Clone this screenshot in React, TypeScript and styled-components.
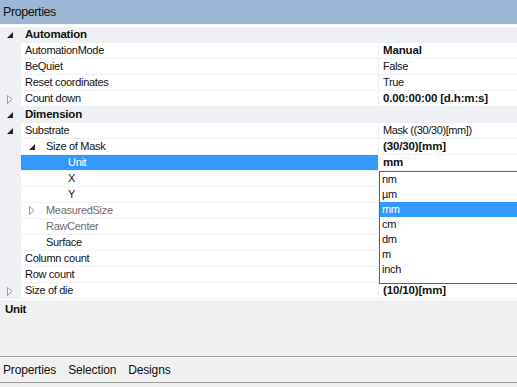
import React from "react";
import styled, { createGlobalStyle } from "styled-components";

const GlobalStyle = createGlobalStyle`
  html, body { margin: 0; padding: 0; background: #f0f0f0; }
  body { font-family: "Liberation Sans", Arial, sans-serif; }
  * { box-sizing: border-box; }
`;

const LINE = "#eef0f3";
const HILITE = "#3399ff";

const Window = styled.div`
  width: 517px;
  height: 387px;
  display: flex;
  flex-direction: column;
  background: #f0f0f0;
  overflow: hidden;
`;

const TitleBar = styled.div`
  height: 24px;
  flex: none;
  background: #9bb7d5;
  display: flex;
  align-items: center;
  padding-left: 3px;
  font-size: 12.5px;
  letter-spacing: -0.4px;
  color: #111;
`;

const Grid = styled.div`
  flex: none;
  height: 274px;
  background: #fff;
  padding-top: 2px;
  display: flex;
  flex-direction: column;
  border-top: 1px solid #f4f6f9;
  position: relative;
`;

const Row = styled.div`
  height: 16px;
  flex: none;
  display: flex;
  font-size: 11px;
  letter-spacing: -0.3px;
  line-height: 15px;
`;

const CategoryRow = styled(Row)`
  background: ${LINE};
  font-weight: bold;
  font-size: 11.5px;
  letter-spacing: -0.2px;
`;

const CategoryName = styled.div`
  display: flex;
  align-items: center;
  height: 15px;
  padding-left: 4px;
  color: #111;
`;

const Gutter = styled.div`
  width: 21px;
  flex: none;
  display: flex;
  align-items: center;
  padding-left: 7px;
  background: ${LINE};
`;

const NameCell = styled.div<{ $selected?: boolean; $disabled?: boolean }>`
  width: 358px;
  flex: none;
  display: flex;
  align-items: center;
  height: 15px;
  padding-left: 4px;
  white-space: nowrap;
  background: ${(p) => (p.$selected ? HILITE : "#fff")};
  color: ${(p) => (p.$selected ? "#fff" : p.$disabled ? "#6d6d6d" : "#111")};
  border-right: 1px solid ${LINE};
`;

const RowLine = styled.div`
  display: flex;
  flex: 1;
  flex-direction: column;
  border-bottom: 1px solid ${LINE};
`;

const RowInner = styled.div`
  display: flex;
  height: 15px;
`;

const ValueCell = styled.div<{ $bold?: boolean }>`
  flex: 1;
  display: flex;
  align-items: center;
  padding-left: 4px;
  white-space: nowrap;
  color: #111;
  font-weight: ${(p) => (p.$bold ? "bold" : "normal")};
  font-size: ${(p) => (p.$bold ? "11.5px" : "11px")};
  letter-spacing: ${(p) => (p.$bold ? "-0.15px" : "-0.4px")};
`;

const Indent = styled.span<{ $w: number }>`
  display: inline-block;
  flex: none;
  width: ${(p) => p.$w}px;
`;

const GlyphSlot = styled.span`
  display: inline-flex;
  align-items: center;
  flex: none;
  width: 21px;
  padding-left: 4px;
`;

const Dropdown = styled.div`
  position: absolute;
  left: 379px;
  top: 146px;
  width: 150px;
  height: 113px;
  background: #fff;
  border: 1px solid #646464;
  display: flex;
  flex-direction: column;
`;

const DropItem = styled.div<{ $active?: boolean }>`
  height: 15px;
  line-height: 15px;
  padding-left: 2px;
  font-size: 11px;
  letter-spacing: -0.3px;
  background: ${(p) => (p.$active ? HILITE : "transparent")};
  color: ${(p) => (p.$active ? "#fff" : "#111")};
`;

const Splitter = styled.div`
  height: 1px;
  flex: none;
  background: #a0a0a0;
`;

const Description = styled.div`
  height: 57px;
  flex: none;
  background: #f0f0f0;
  padding: 3px 5px;
  font-size: 11.5px;
  font-weight: bold;
  letter-spacing: -0.3px;
  color: #111;
  border-top: 1px solid #fff;
`;

const TabBar = styled.div`
  height: 25px;
  flex: none;
  display: flex;
  align-items: center;
  gap: 12px;
  padding-left: 3px;
  font-size: 12px;
  letter-spacing: -0.15px;
  color: #111;
  border-top: 1px solid #fff;
`;

const Tab = styled.span``;

const Expanded = () => (
  <svg width="6" height="6" viewBox="0 0 6 6">
    <polygon points="6,0 6,6 0,6" fill="#262626" />
  </svg>
);

const Collapsed = () => (
  <svg width="6" height="9" viewBox="0 0 6 9">
    <polygon points="0.5,0.5 5,4.5 0.5,8.5" fill="#fff" stroke="#9a9a9a" strokeWidth="1" />
  </svg>
);

type Glyph = "open" | "closed" | undefined;

type Item = {
  kind: "cat" | "prop";
  name: string;
  level?: number;
  glyph?: Glyph;
  value?: string;
  bold?: boolean;
  selected?: boolean;
  disabled?: boolean;
};

const items: Item[] = [
  { kind: "cat", name: "Automation", glyph: "open" },
  { kind: "prop", name: "AutomationMode", level: 1, value: "Manual", bold: true },
  { kind: "prop", name: "BeQuiet", level: 1, value: "False" },
  { kind: "prop", name: "Reset coordinates", level: 1, value: "True" },
  { kind: "prop", name: "Count down", level: 1, glyph: "closed", value: "0.00:00:00 [d.h:m:s]", bold: true },
  { kind: "cat", name: "Dimension", glyph: "open" },
  { kind: "prop", name: "Substrate", level: 1, glyph: "open", value: "Mask ((30/30)[mm])" },
  { kind: "prop", name: "Size of Mask", level: 2, glyph: "open", value: "(30/30)[mm]", bold: true },
  { kind: "prop", name: "Unit", level: 3, value: "mm", bold: true, selected: true },
  { kind: "prop", name: "X", level: 3 },
  { kind: "prop", name: "Y", level: 3 },
  { kind: "prop", name: "MeasuredSize", level: 2, glyph: "closed", disabled: true },
  { kind: "prop", name: "RawCenter", level: 2, disabled: true },
  { kind: "prop", name: "Surface", level: 2 },
  { kind: "prop", name: "Column count", level: 1 },
  { kind: "prop", name: "Row count", level: 1 },
  { kind: "prop", name: "Size of die", level: 1, glyph: "closed", value: "(10/10)[mm]", bold: true },
];

const renderGlyph = (g: Glyph) => (g === "open" ? <Expanded /> : g === "closed" ? <Collapsed /> : null);

const units = ["nm", "\u00b5m", "mm", "cm", "dm", "m", "inch"];

export default function App() {
  return (
    <Window>
      <GlobalStyle />
      <TitleBar>Properties</TitleBar>
      <Grid>
        {items.map((it, i) => {
          if (it.kind === "cat") {
            return (
              <CategoryRow key={i}>
                <Gutter>{renderGlyph(it.glyph)}</Gutter>
                <CategoryName>{it.name}</CategoryName>
              </CategoryRow>
            );
          }
          const level = it.level ?? 1;
          return (
            <Row key={i}>
              <Gutter>{level === 1 ? renderGlyph(it.glyph) : null}</Gutter>
              <RowLine>
                <RowInner>
                  <NameCell $selected={it.selected} $disabled={it.disabled}>
                    {level >= 3 && <Indent $w={22 * (level - 2)} />}
                    {level >= 2 && <GlyphSlot>{renderGlyph(it.glyph)}</GlyphSlot>}
                    {it.name}
                  </NameCell>
                  <ValueCell $bold={it.bold}>{it.value}</ValueCell>
                </RowInner>
              </RowLine>
            </Row>
          );
        })}
        <Dropdown>
          {units.map((u) => (
            <DropItem key={u} $active={u === "mm"}>
              {u}
            </DropItem>
          ))}
        </Dropdown>
      </Grid>
      <Splitter />
      <Description>Unit</Description>
      <Splitter />
      <TabBar>
        <Tab>Properties</Tab>
        <Tab>Selection</Tab>
        <Tab>Designs</Tab>
      </TabBar>
      <Splitter />
    </Window>
  );
}
